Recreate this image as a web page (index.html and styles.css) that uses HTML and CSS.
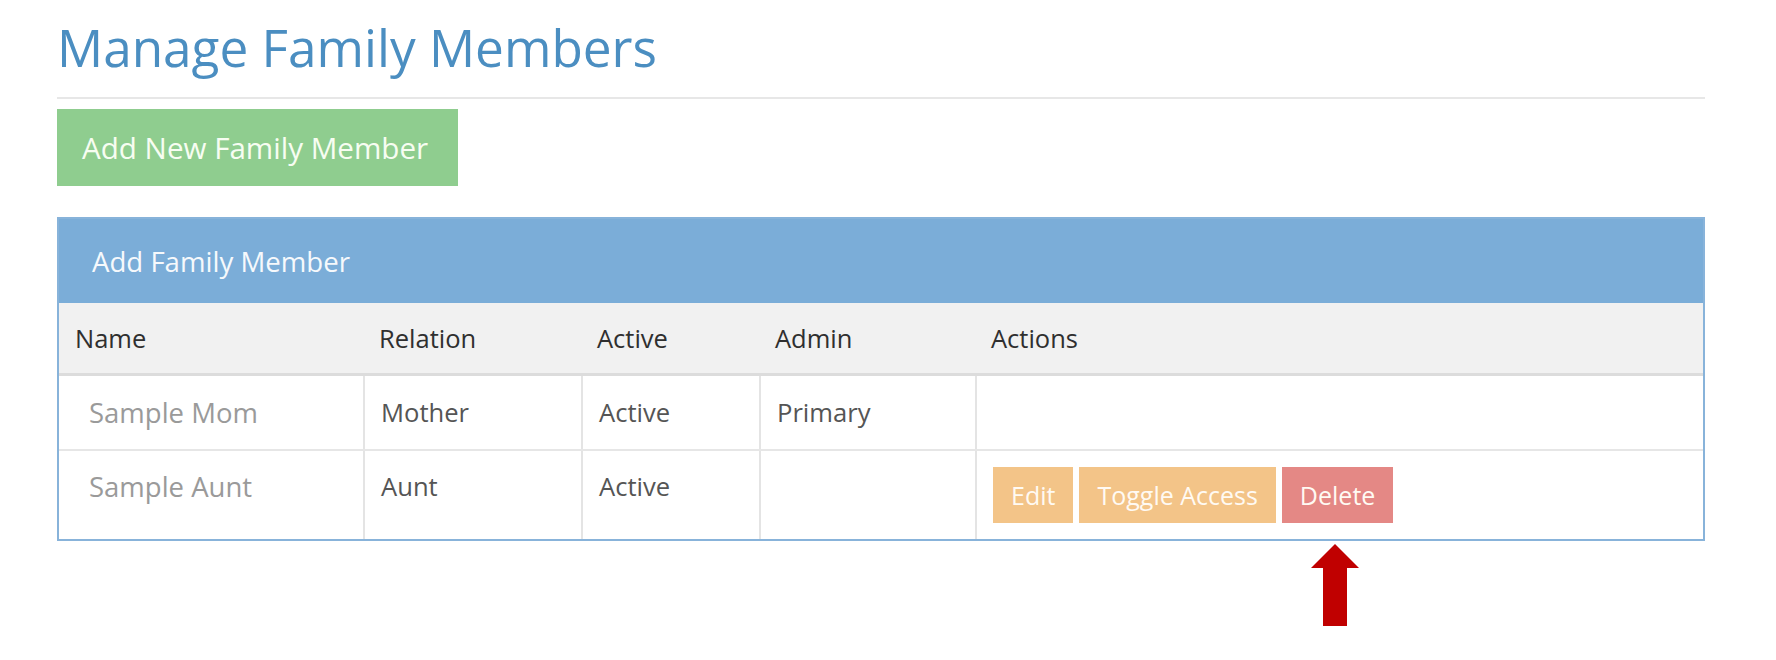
FILE: index.html
```html
<!DOCTYPE html>
<html lang="en">
<head>
<meta charset="utf-8">
<title>Manage Family Members</title>
<link rel="stylesheet" href="styles.css">
</head>
<body>
<div class="page">
  <h1 class="title">Manage Family Members</h1>
  <div class="rule"></div>
  <button class="btn-add">Add New Family Member</button>
  <section class="panel">
    <div class="panel-heading">Add Family Member</div>
    <div class="table">
      <div class="tr thead">
        <div class="th">Name</div>
        <div class="th">Relation</div>
        <div class="th">Active</div>
        <div class="th">Admin</div>
        <div class="th">Actions</div>
      </div>
      <div class="tr body-row first">
        <div class="td name">Sample Mom</div>
        <div class="td">Mother</div>
        <div class="td">Active</div>
        <div class="td">Primary</div>
        <div class="td"></div>
      </div>
      <div class="tr body-row">
        <div class="td name">Sample Aunt</div>
        <div class="td">Aunt</div>
        <div class="td">Active</div>
        <div class="td"></div>
        <div class="td actions">
          <button class="btn btn-warn">Edit</button>
          <button class="btn btn-warn">Toggle Access</button>
          <button class="btn btn-danger">Delete</button>
        </div>
      </div>
    </div>
  </section>
  <div class="annotation">
    <svg class="pointer" width="48" height="82" viewBox="0 0 48 82">
      <polygon points="24,0 48,24 36,24 36,82 12,82 12,24 0,24" fill="#c00000"></polygon>
    </svg>
  </div>
</div>
</body>
</html>
```
FILE: styles.css
```css
html, body {
  margin: 0;
  padding: 0;
  background: #ffffff;
}

body {
  font-family: "Open Sans", "Liberation Sans", Arial, sans-serif;
  color: #555555;
}

.page {
  padding: 1px 71px 0 57px;
  width: 1648px;
}

.title {
  margin: 15px 0 0 0;
  font-size: 51.3px;
  line-height: 62px;
  font-weight: 400;
  color: #4b8ec1;
}

.rule {
  margin-top: 19px;
  height: 2px;
  background: #e7e7e7;
}

.btn-add {
  display: block;
  margin-top: 10px;
  height: 77px;
  width: 401px;
  padding: 0 0 0 25px;
  text-align: left;
  border: none;
  background: #8fcd8f;
  color: #f7fdf2;
  font-family: "Open Sans", "Liberation Sans", Arial, sans-serif;
  font-size: 29.6px;
  line-height: 77px;
}

.panel {
  margin-top: 31px;
  border: 2px solid #88b3da;
  width: 1648px;
  box-sizing: border-box;
}

.panel-heading {
  height: 84px;
  line-height: 84px;
  padding-left: 33px;
  background: #7badd8;
  color: #f6f9fc;
  font-size: 27.6px;
}

.tr {
  display: grid;
  grid-template-columns: 304px 218px 178px 216px 1fr;
}

.thead {
  background: #f1f1f1;
  border-bottom: 3px solid #dcdcdc;
}

.th {
  height: 70px;
  line-height: 70px;
  padding-left: 16px;
  font-size: 25.5px;
  font-weight: 500;
  color: #2f2f2f;
}

.body-row.first {
  border-bottom: 2px solid #e6e6e6;
}

.td {
  border-left: 2px solid #e4e4e4;
  padding: 17px 0 17px 16px;
  font-size: 25.6px;
  line-height: 39px;
  min-height: 39px;
  color: #555555;
}

.body-row:not(.first) .td {
  padding-top: 16px;
  padding-bottom: 16px;
}

.td.name {
  border-left: none;
  padding-left: 30px;
  font-size: 27.5px;
  color: #9a9a9a;
}

.actions {
  display: flex;
  gap: 6px;
}

.btn {
  height: 56px;
  padding: 0 18px;
  border: none;
  font-family: "Open Sans", "Liberation Sans", Arial, sans-serif;
  font-size: 25px;
  line-height: 56px;
  color: #fffaf3;
}

.btn-warn {
  background: #f3c488;
}

.btn-danger {
  background: #e48885;
}

.annotation {
  margin-top: 3px;
  padding-left: 1254px;
  height: 82px;
}

.pointer {
  display: block;
}
```
